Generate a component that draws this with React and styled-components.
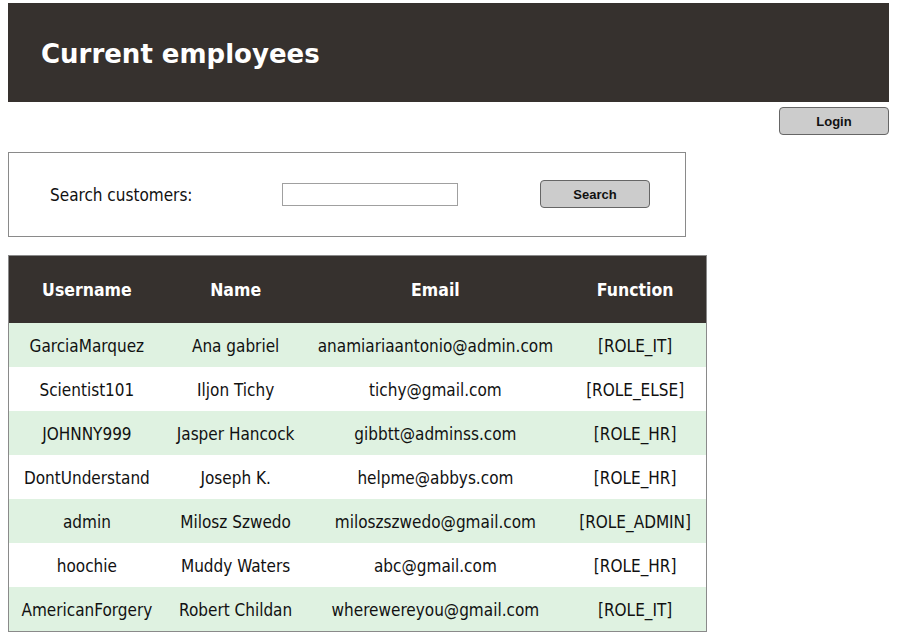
import React from 'react';
import styled, { createGlobalStyle } from 'styled-components';

const colors = {
    dark: '#36312e',
    white: '#ffffff',
    green: '#dff2e1',
    border: '#8a8a8a',
    button: '#cccccc',
    text: '#111111'
};

const GlobalStyle = createGlobalStyle`
    body {
        margin: 0;
        padding: 3px 10px 8px 8px;
        background: ${colors.white};
        font-family: "DejaVu Sans Condensed", "DejaVu Sans", sans-serif;
        color: ${colors.text};
    }
`;

const Header = styled.header`
    background: ${colors.dark};
    height: 99px;
    display: flex;
    align-items: center;
    padding-left: 33px;
`;

const Title = styled.h1`
    margin: 0;
    color: ${colors.white};
    font-family: "DejaVu Sans", Verdana, sans-serif;
    font-weight: bold;
    font-size: 26px;
    padding-top: 2px;
`;

const TopBar = styled.div`
    display: flex;
    justify-content: flex-end;
    padding-top: 5px;
`;

const Button = styled.button`
    width: ${props => props.width || 110}px;
    height: ${props => props.height || 28}px;
    background: ${colors.button};
    border: 1px solid #666;
    border-radius: 4px;
    font-family: "Liberation Sans", Arial, sans-serif;
    font-weight: bold;
    font-size: 13px;
    color: #111;
    cursor: pointer;
    padding: 0;
`;

const SearchBox = styled.form`
    margin-top: 17px;
    width: 678px;
    height: 85px;
    box-sizing: border-box;
    border: 1px solid ${colors.border};
    display: flex;
    align-items: center;
    padding-left: 41px;
    padding-bottom: 1px;
`;

const Label = styled.label`
    font-size: 17px;
    width: 232px;
    padding-top: 1px;
`;

const Input = styled.input`
    width: 176px;
    height: 23px;
    box-sizing: border-box;
    border: 1px solid #a0a0a0;
    margin-right: 82px;
    padding: 0 4px;
`;

const Table = styled.table`
    margin-top: 18px;
    width: 699px;
    border-collapse: collapse;
    border: 1px solid ${colors.border};
    font-size: 17px;
`;

const HeadCell = styled.th`
    background: ${colors.dark};
    color: ${colors.white};
    height: 67px;
    font-weight: bold;
    font-size: 17.5px;
    padding: 0;
    width: ${props => props.w}px;
`;

const Row = styled.tr`
    background: ${props => (props.striped ? colors.green : colors.white)};
`;

const Cell = styled.td`
    height: 44px;
    box-sizing: border-box;
    text-align: center;
    padding: 2px 0 0;
    white-space: nowrap;
`;

const employees = [
    ['GarciaMarquez', 'Ana gabriel', 'anamiariaantonio@admin.com', '[ROLE_IT]'],
    ['Scientist101', 'Iljon Tichy', 'tichy@gmail.com', '[ROLE_ELSE]'],
    ['JOHNNY999', 'Jasper Hancock', 'gibbtt@adminss.com', '[ROLE_HR]'],
    ['DontUnderstand', 'Joseph K.', 'helpme@abbys.com', '[ROLE_HR]'],
    ['admin', 'Milosz Szwedo', 'miloszszwedo@gmail.com', '[ROLE_ADMIN]'],
    ['hoochie', 'Muddy Waters', 'abc@gmail.com', '[ROLE_HR]'],
    ['AmericanForgery', 'Robert Childan', 'wherewereyou@gmail.com', '[ROLE_IT]']
];

const columns = [
    { title: 'Username', w: 156 },
    { title: 'Name', w: 142 },
    { title: 'Email', w: 258 },
    { title: 'Function', w: 142 }
];

const App = () => (
    <>
        <GlobalStyle />
        <Header>
            <Title>Current employees</Title>
        </Header>
        <TopBar>
            <Button type="button">Login</Button>
        </TopBar>
        <SearchBox onSubmit={e => e.preventDefault()}>
            <Label htmlFor="search">Search customers:</Label>
            <Input id="search" type="text" />
            <Button type="submit">Search</Button>
        </SearchBox>
        <Table>
            <thead>
                <tr>
                    {columns.map(c => (
                        <HeadCell key={c.title} w={c.w}>{c.title}</HeadCell>
                    ))}
                </tr>
            </thead>
            <tbody>
                {employees.map((row, i) => (
                    <Row key={row[0]} striped={i % 2 === 0}>
                        {row.map((value, j) => (
                            <Cell key={j}>{value}</Cell>
                        ))}
                    </Row>
                ))}
            </tbody>
        </Table>
    </>
);

export default App;
